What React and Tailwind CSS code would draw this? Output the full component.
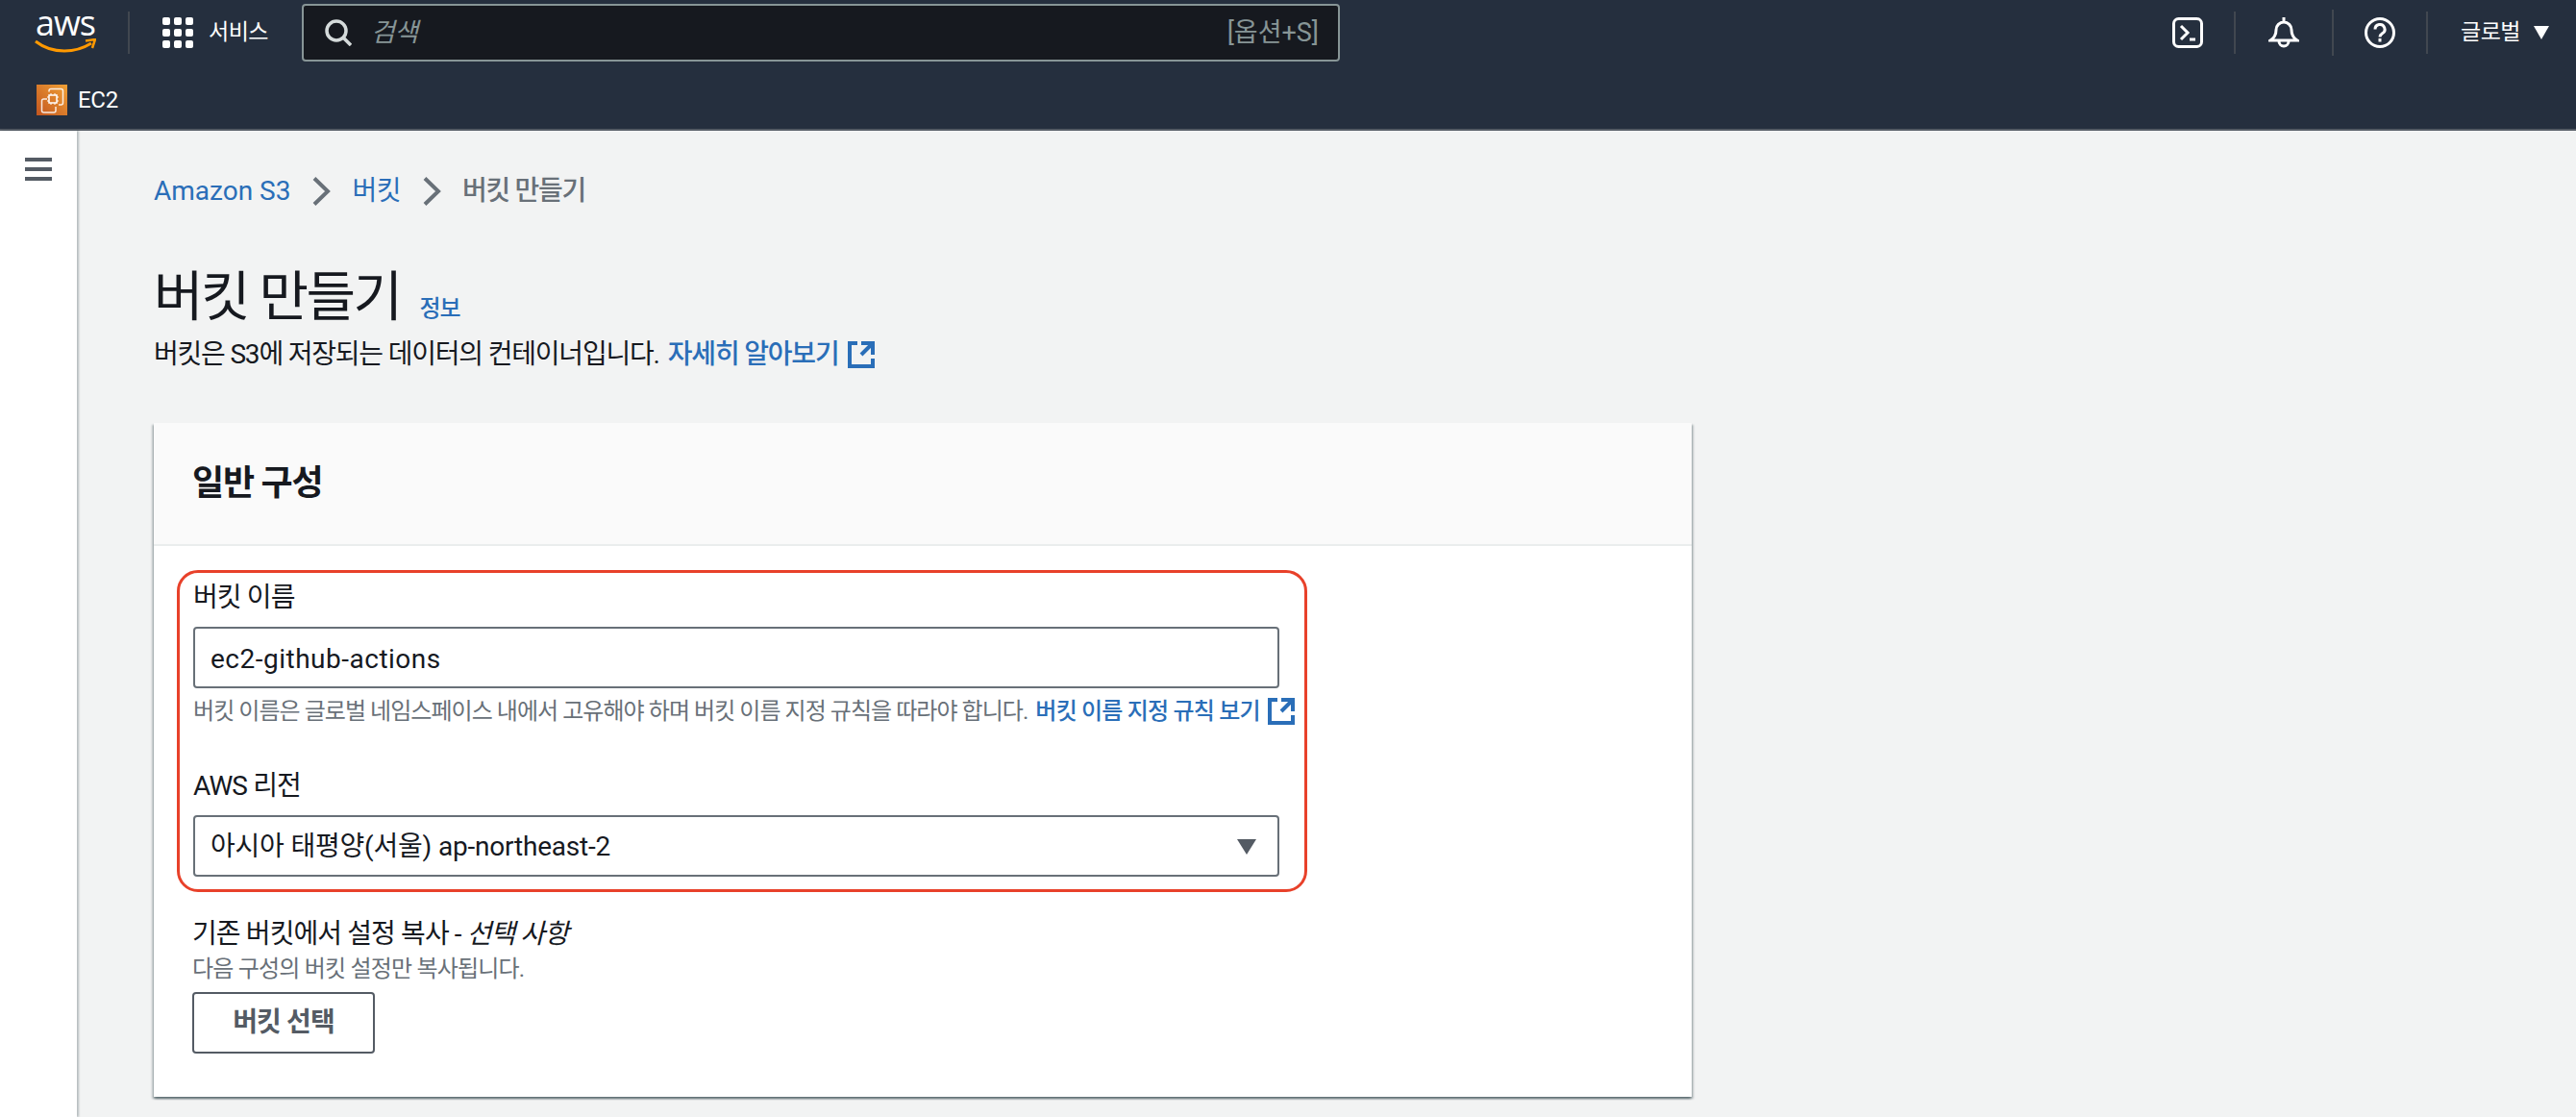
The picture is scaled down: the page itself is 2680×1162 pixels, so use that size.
import React from 'react';

const FONT = "font-['Roboto','Noto_Sans_CJK_KR',sans-serif]";

const ExternalIcon = ({ className }) => (
    <svg viewBox="1 1 14 14" fill="none" stroke="currentColor" strokeWidth="2" className={className}>
        <path d="M14 8V2H8M14 2 8 8M6 2H2v12h12v-4" />
    </svg>
);

const Chevron = () => (
    <svg viewBox="0 0 20 30" fill="none" stroke="#687078" strokeWidth="4" className="w-[20px] h-[30px] shrink-0">
        <path d="M3 1.500 17 15 3 28.500" />
    </svg>
);

const Divider = ({ className = '' }) => <div className={`w-[2px] bg-[#414750] ${className}`} />;

const GlobalHeader = () => (
    <header className="h-[136px] bg-[#252f3e] border-b-2 border-[#545b64] text-white">
        {/* Top row */}
        <div className="h-[68px] flex items-center">
            <div className="ml-[36px] w-[64px] h-full pt-[5px] flex flex-col items-center shrink-0">
                <span className="font-['Open_Sans',sans-serif] text-[36px] leading-[38px] tracking-[-1px]">aws</span>
                <svg viewBox="0 0 64 16" className="w-[64px] h-[16px] mt-[-3px]" fill="none">
                    <path d="M1 3c9 7 20 10 30 10 10 0 20-3 28-8" stroke="#f90" strokeWidth="3" />
                    <path d="M53 2.500 63 1l-3 9" stroke="#f90" strokeWidth="2.500" />
                </svg>
            </div>
            <Divider className="h-[44px] ml-[33px] mr-[34px]" />
            <svg viewBox="0 0 32 32" fill="#fff" className="w-[32px] h-[32px] shrink-0">
                {[0, 12, 24].map((y) =>
                    [0, 12, 24].map((x) => <rect key={`${x}-${y}`} x={x} y={y} width="8" height="8" rx="2" />)
                )}
            </svg>
            <span className="ml-[16px] text-[23px] tracking-[-0.5px] w-[65px]">서비스</span>
            <div className="ml-[32px] w-[1080px] h-[60px] bg-[#16191f] border-2 border-[#879596] rounded-[4px] flex items-center pl-[22px] pr-[20px] text-[#879596] text-[27px]">
                <svg viewBox="0 0 28 28" fill="none" stroke="#d5dbdb" strokeWidth="3.500" className="w-[28px] h-[28px] shrink-0">
                    <circle cx="12" cy="12" r="10" />
                    <path d="m19 19 8 8" />
                </svg>
                <span className="ml-[20px] italic tracking-[-0.5px]">검색</span>
                <span className="ml-auto">[옵션+S]</span>
            </div>
            <div className="ml-auto flex items-center">
                <svg viewBox="0 0 32 32" fill="none" stroke="#fff" strokeWidth="3" className="w-[32px] h-[32px]">
                    <rect x="1.500" y="1.500" width="29" height="29" rx="5" />
                    <path d="m9 9 7 7-7 7M18 23h6" />
                </svg>
                <Divider className="h-[44px] ml-[32px] mr-[34px]" />
                <svg viewBox="0 0 32 32" fill="none" stroke="#fff" strokeWidth="3" className="w-[32px] h-[32px]">
                    <path d="M16 0v4M2 24h28c-5-3-6-7-6-11a8 8 0 0 0-16 0c0 4-1 8-6 11ZM11 25a5 5 0 0 0 10 0" />
                </svg>
                <Divider className="h-[48px] ml-[34px] mr-[32px]" />
                <svg viewBox="0 0 32 32" fill="none" stroke="#fff" strokeWidth="3" className="w-[32px] h-[32px]">
                    <circle cx="16" cy="16" r="14.500" />
                    <path d="M11 12.500a5 5 0 1 1 7.500 4.300c-1.500 1-2.500 2-2.500 3.700" />
                    <path d="M16 22v3.500" />
                </svg>
                <Divider className="h-[44px] ml-[32px] mr-[34px]" />
                <span className="text-[23px] tracking-[-0.5px] w-[64px]">글로벌</span>
                <svg viewBox="0 0 16 14" fill="#fff" className="w-[16px] h-[14px] ml-[12px] mr-[28px]">
                    <path d="M0 0h16L8 14Z" />
                </svg>
            </div>
        </div>
        {/* Service shortcut row */}
        <div className="h-[66px] flex items-start pt-[20px] pl-[38px]">
            <div className="w-[32px] h-[32px] bg-gradient-to-tr from-[#c2551f] to-[#f0a136]">
                <svg viewBox="0 0 32 32" fill="none" stroke="#fff" strokeWidth="1.500" className="w-[32px] h-[32px]">
                    <path d="M13 7.500V6.500a2 2 0 0 1 2-2h10.500a2 2 0 0 1 2 2V19a2 2 0 0 1-2 2H23" opacity="0.85" />
                    <path d="M11 15H7.500a2 2 0 0 0-2 2v10a2 2 0 0 0 2 2h10.500a2 2 0 0 0 2-2v-4" opacity="0.85" />
                    <rect x="13" y="11" width="8" height="8" />
                    <path d="M15 9v2M19 9v2M15 19v2M19 19v2M11 13h2M11 17h2M21 13h2M21 17h2" strokeWidth="1" />
                </svg>
            </div>
            <span className="ml-[11px] text-[24px] tracking-[-0.3px] leading-[32px]">EC2</span>
        </div>
    </header>
);

const Sidebar = () => (
    <aside className="w-[80px] shrink-0 bg-white shadow-[2px_0_2px_rgba(0,28,36,0.25)] pt-[28px] flex justify-center">
        <div className="w-[28px] h-[24px] flex flex-col justify-between">
            <div className="h-[4px] bg-[#545b64]" />
            <div className="h-[4px] bg-[#545b64]" />
            <div className="h-[4px] bg-[#545b64]" />
        </div>
    </aside>
);

const App = () => {
    return (
        <div className={`${FONT} w-[2680px] h-[1162px] overflow-hidden flex flex-col bg-[#f2f3f3] text-[#16191f]`}>
            <GlobalHeader />
            <div className="flex flex-1 min-h-0">
                <Sidebar />
                <main className="flex-1 pl-[80px]">
                    {/* Breadcrumbs */}
                    <nav className="mt-[48px] h-[30px] flex items-center text-[28px] leading-[30px] tracking-[-0.5px]">
                        <span className="text-[#2a6eb8] tracking-normal">Amazon S3</span>
                        <span className="mx-[22px]"><Chevron /></span>
                        <span className="text-[#2a6eb8]">버킷</span>
                        <span className="mx-[22px]"><Chevron /></span>
                        <span className="text-[#687078] font-medium tracking-[-1.300px]">버킷 만들기</span>
                    </nav>

                    {/* Page title */}
                    <div className="mt-[63px] flex items-end">
                        <h1 className="text-[56px] leading-[64px] font-normal tracking-[-2.500px]">버킷 만들기</h1>
                        <span className="ml-[20px] mb-[5px] text-[24px] leading-[30px] font-medium tracking-[-1px] text-[#2a6eb8]">정보</span>
                    </div>
                    <p className="mt-[10px] text-[28px] leading-[36px] tracking-[-1.200px] flex items-center">
                        버킷은 S3에 저장되는 데이터의 컨테이너입니다.
                        <span className="ml-[9px] text-[#2a6eb8] font-medium">자세히 알아보기</span>
                        <ExternalIcon className="ml-[10px] w-[28px] h-[28px] text-[#2a6eb8]" />
                    </p>

                    {/* General config card */}
                    <section className="mt-[53px] w-[1600px] bg-white shadow-[0_2px_2px_rgba(0,28,36,0.4),2px_2px_2px_rgba(0,28,36,0.2),-2px_2px_2px_rgba(0,28,36,0.2)]">
                        <div className="h-[128px] bg-[#fafafa] border-b-2 border-[#eaeded] flex items-center pl-[40px]">
                            <h2 className="text-[36px] font-bold tracking-[-1.200px]">일반 구성</h2>
                        </div>
                        <div className="pt-[25px] pb-[45px] pl-[24px]">
                            <div className="w-[1176px] h-[335px] border-[3px] border-[#e8412a] rounded-[22px] pl-[14px] pt-[8px]">
                                <label className="block text-[28px] leading-[36px] tracking-[-0.9px]">버킷 이름</label>
                                <div className="mt-[12px] w-[1130px] h-[64px] border-2 border-[#687078] rounded-[4px] bg-white flex items-center pl-[16px] pt-[4px] text-[28px] tracking-[0.5px]">
                                    ec2-github-actions
                                </div>
                                <p className="mt-[8px] text-[24px] leading-[32px] tracking-[-0.95px] text-[#687078] flex items-center whitespace-nowrap">
                                    버킷 이름은 글로벌 네임스페이스 내에서 고유해야 하며 버킷 이름 지정 규칙을 따라야 합니다.
                                    <span className="ml-[8px] text-[#2a6eb8] font-medium tracking-[-0.8px]">버킷 이름 지정 규칙 보기</span>
                                    <ExternalIcon className="ml-[8px] w-[28px] h-[28px] text-[#2a6eb8]" />
                                </p>
                                <label className="block mt-[44px] text-[28px] leading-[36px] tracking-[-0.9px]">AWS 리전</label>
                                <div className="mt-[12px] w-[1130px] h-[64px] border-2 border-[#687078] rounded-[4px] bg-white flex items-center pl-[16px] pr-[22px] pt-[2px] text-[28px] tracking-[-0.2px]">
                                    아시아 태평양(서울) ap-northeast-2
                                    <svg viewBox="0 0 20 16" fill="#545b64" className="ml-auto w-[20px] h-[16px]">
                                        <path d="M0 0h20L10 16Z" />
                                    </svg>
                                </div>
                            </div>
                            <div className="pl-[16px] mt-[26px]">
                                <p className="text-[28px] leading-[36px] tracking-[-0.9px]">
                                    기존 버킷에서 설정 복사 - <em>선택 사항</em>
                                </p>
                                <p className="text-[24px] leading-[32px] tracking-[-0.8px] text-[#687078] mt-[2px]">다음 구성의 버킷 설정만 복사됩니다.</p>
                                <button className="mt-[8px] w-[190px] h-[64px] border-2 border-[#545b64] rounded-[4px] bg-white text-[#545b64] text-[28px] font-bold tracking-[-0.9px]">
                                    버킷 선택
                                </button>
                            </div>
                        </div>
                    </section>
                </main>
            </div>
        </div>
    );
};

export default App;
